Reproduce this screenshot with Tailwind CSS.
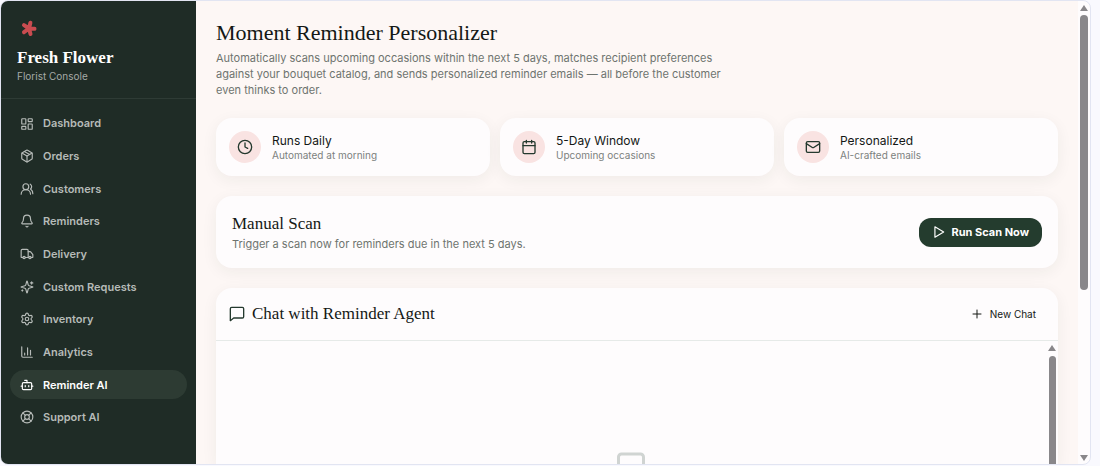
<!DOCTYPE html>
<html lang="en">
  <head>
    <meta charset="UTF-8" />
    <title>Fresh Flower | Florist Console</title>
    <meta name="viewport" content="width=device-width, initial-scale=1" />
    <script src="https://cdn.jsdelivr.net/npm/@tailwindcss/browser@4"></script>
  </head>
  <body class="h-screen overflow-hidden bg-[#f9f9fe] font-['Inter',sans-serif] text-[#141815]">
    <div class="h-full pr-[9px] pb-px">
      <div class="flex h-full overflow-hidden rounded-lg border border-[#e2e5f2] bg-[#fefcfd]">
        <aside class="flex w-[195px] shrink-0 flex-col bg-[#1f2c26]">
          <div class="border-b border-[#2e3b35] px-4 pt-[17px] pb-4">
            <svg class="size-6" viewBox="0 0 24 24" fill="none" stroke="#c94c50" stroke-width="4" stroke-linecap="round" aria-hidden="true">
              <path d="M12 10.500 13.400 4.800M12 10.500 17.500 10.800M12 10.500 13.500 16M12 10.500 7 14.200M12 10.500 7 7.200" />
            </svg>
            <h2 class="mt-1 font-['Liberation_Serif',serif] text-[17px] leading-6 font-bold text-white">Fresh Flower</h2>
            <p class="text-[10px] leading-3 text-[#a5aaa7]">Florist Console</p>
          </div>
          <nav class="flex flex-1 flex-col justify-between px-[9px] pt-[10px] pb-8 text-[11px] font-semibold text-[#b6bbb8]">
            <a href="#" class="flex h-[29px] items-center gap-[9px] rounded-full px-[10px]">
              <svg class="size-3.5" viewBox="0 0 24 24" fill="none" stroke="currentColor" stroke-width="2" stroke-linecap="round" stroke-linejoin="round" aria-hidden="true">
                <rect width="7" height="9" x="3" y="3" rx="1" />
                <rect width="7" height="5" x="14" y="3" rx="1" />
                <rect width="7" height="9" x="14" y="12" rx="1" />
                <rect width="7" height="5" x="3" y="16" rx="1" />
              </svg>
              Dashboard
            </a>
            <a href="#" class="flex h-[29px] items-center gap-[9px] rounded-full px-[10px]">
              <svg class="size-3.5" viewBox="0 0 24 24" fill="none" stroke="currentColor" stroke-width="2" stroke-linecap="round" stroke-linejoin="round" aria-hidden="true">
                <path d="M11 21.730a2 2 0 0 0 2 0l7-4A2 2 0 0 0 21 16V8a2 2 0 0 0-1-1.730l-7-4a2 2 0 0 0-2 0l-7 4A2 2 0 0 0 3 8v8a2 2 0 0 0 1 1.730z" />
                <path d="M12 22V12" />
                <path d="M3.300 7 12 12l8.700-5" />
                <path d="m7.500 4.270 9 5.150" />
              </svg>
              Orders
            </a>
            <a href="#" class="flex h-[29px] items-center gap-[9px] rounded-full px-[10px]">
              <svg class="size-3.5" viewBox="0 0 24 24" fill="none" stroke="currentColor" stroke-width="2" stroke-linecap="round" stroke-linejoin="round" aria-hidden="true">
                <path d="M18 21a8 8 0 0 0-16 0" />
                <circle cx="10" cy="8" r="5" />
                <path d="M22 20c0-3.370-2-6.500-4-8a5 5 0 0 0-.450-8.300" />
              </svg>
              Customers
            </a>
            <a href="#" class="flex h-[29px] items-center gap-[9px] rounded-full px-[10px]">
              <svg class="size-3.5" viewBox="0 0 24 24" fill="none" stroke="currentColor" stroke-width="2" stroke-linecap="round" stroke-linejoin="round" aria-hidden="true">
                <path d="M10.268 21a2 2 0 0 0 3.464 0" />
                <path d="M3.262 15.326A1 1 0 0 0 4 17h16a1 1 0 0 0 .740-1.673C19.410 13.956 18 12.499 18 8A6 6 0 0 0 6 8c0 4.499-1.411 5.956-2.738 7.326" />
              </svg>
              Reminders
            </a>
            <a href="#" class="flex h-[29px] items-center gap-[9px] rounded-full px-[10px]">
              <svg class="size-3.5" viewBox="0 0 24 24" fill="none" stroke="currentColor" stroke-width="2" stroke-linecap="round" stroke-linejoin="round" aria-hidden="true">
                <path d="M14 18V6a2 2 0 0 0-2-2H4a2 2 0 0 0-2 2v11a1 1 0 0 0 1 1h2" />
                <path d="M15 18H9" />
                <path d="M19 18h2a1 1 0 0 0 1-1v-3.650a1 1 0 0 0-.220-.624l-3.480-4.350A1 1 0 0 0 17.520 8H14" />
                <circle cx="17" cy="18" r="2" />
                <circle cx="7" cy="18" r="2" />
              </svg>
              Delivery
            </a>
            <a href="#" class="flex h-[29px] items-center gap-[9px] rounded-full px-[10px]">
              <svg class="size-3.5" viewBox="0 0 24 24" fill="none" stroke="currentColor" stroke-width="2" stroke-linecap="round" stroke-linejoin="round" aria-hidden="true">
                <path d="M9.937 15.500A2 2 0 0 0 8.500 14.063l-6.135-1.582a.5.5 0 0 1 0-.962L8.500 9.936A2 2 0 0 0 9.937 8.500l1.582-6.135a.5.5 0 0 1 .963 0L14.063 8.500A2 2 0 0 0 15.500 9.937l6.135 1.581a.5.5 0 0 1 0 .964L15.500 14.063a2 2 0 0 0-1.437 1.437l-1.582 6.135a.5.5 0 0 1-.963 0z" />
                <path d="M20 3v4M22 5h-4M4 17v2M5 18H3" />
              </svg>
              Custom Requests
            </a>
            <a href="#" class="flex h-[29px] items-center gap-[9px] rounded-full px-[10px]">
              <svg class="size-3.5" viewBox="0 0 24 24" fill="none" stroke="currentColor" stroke-width="2" stroke-linecap="round" stroke-linejoin="round" aria-hidden="true">
                <path d="M9.671 4.136a2.340 2.340 0 0 1 4.659 0 2.340 2.340 0 0 0 3.319 1.915 2.340 2.340 0 0 1 2.330 4.033 2.340 2.340 0 0 0 0 3.831 2.340 2.340 0 0 1-2.330 4.033 2.340 2.340 0 0 0-3.319 1.915 2.340 2.340 0 0 1-4.659 0 2.340 2.340 0 0 0-3.320-1.915 2.340 2.340 0 0 1-2.330-4.033 2.340 2.340 0 0 0 0-3.831A2.340 2.340 0 0 1 6.350 6.051a2.340 2.340 0 0 0 3.319-1.915" />
                <circle cx="12" cy="12" r="3" />
              </svg>
              Inventory
            </a>
            <a href="#" class="flex h-[29px] items-center gap-[9px] rounded-full px-[10px]">
              <svg class="size-3.5" viewBox="0 0 24 24" fill="none" stroke="currentColor" stroke-width="2" stroke-linecap="round" stroke-linejoin="round" aria-hidden="true">
                <path d="M3 3v16a2 2 0 0 0 2 2h16M8 17v-3M13 17V5M18 17V9" />
              </svg>
              Analytics
            </a>
            <a href="#" aria-current="page" class="flex h-[29px] items-center gap-[9px] rounded-full bg-[#2d3b33] px-[10px] text-white">
              <svg class="size-3.5" viewBox="0 0 24 24" fill="none" stroke="currentColor" stroke-width="2" stroke-linecap="round" stroke-linejoin="round" aria-hidden="true">
                <path d="M12 8V4H8" />
                <rect width="16" height="12" x="4" y="8" rx="2" />
                <path d="M2 14h2M20 14h2M15 13v2M9 13v2" />
              </svg>
              Reminder AI
            </a>
            <a href="#" class="flex h-[29px] items-center gap-[9px] rounded-full px-[10px]">
              <svg class="size-3.5" viewBox="0 0 24 24" fill="none" stroke="currentColor" stroke-width="2" stroke-linecap="round" stroke-linejoin="round" aria-hidden="true">
                <circle cx="12" cy="12" r="10" />
                <path d="m4.930 4.930 4.240 4.240M14.830 9.170l4.240-4.240M14.830 14.830l4.240 4.240M9.170 14.830l-4.240 4.240" />
                <circle cx="12" cy="12" r="4" />
              </svg>
              Support AI
            </a>
          </nav>
        </aside>

        <main class="flex min-w-0 flex-1 flex-col overflow-hidden bg-[#fdf7f5] px-5 pt-5">
          <h1 class="font-['Liberation_Serif',serif] text-[22px] leading-6">Moment Reminder Personalizer</h1>
          <p class="mt-[5px] max-w-[520px] text-[11px] leading-4 text-[#6e746f]">
            Automatically scans upcoming occasions within the next 5 days, matches recipient preferences against your bouquet catalog, and sends personalized reminder emails — all before the customer even thinks to order.
          </p>

          <div class="mt-5 grid shrink-0 grid-cols-3 gap-[10px]">
            <div class="flex h-[58px] items-center gap-[11px] rounded-2xl bg-[#fefcfd] px-[13px] shadow-[0_4px_16px_rgba(31,44,38,0.06)]">
              <div class="flex size-8 items-center justify-center rounded-full bg-[#f9e3e2]">
                <svg class="size-4" viewBox="0 0 24 24" fill="none" stroke="#24392e" stroke-width="2" stroke-linecap="round" stroke-linejoin="round" aria-hidden="true">
                  <circle cx="12" cy="12" r="10" />
                  <path d="M12 6v6l4 2" />
                </svg>
              </div>
              <div>
                <h3 class="text-xs leading-4">Runs Daily</h3>
                <p class="text-[10px] leading-3 text-[#7c817e]">Automated at morning</p>
              </div>
            </div>
            <div class="flex h-[58px] items-center gap-[11px] rounded-2xl bg-[#fefcfd] px-[13px] shadow-[0_4px_16px_rgba(31,44,38,0.06)]">
              <div class="flex size-8 items-center justify-center rounded-full bg-[#f9e3e2]">
                <svg class="size-4" viewBox="0 0 24 24" fill="none" stroke="#24392e" stroke-width="2" stroke-linecap="round" stroke-linejoin="round" aria-hidden="true">
                  <path d="M8 2v4M16 2v4M3 10h18" />
                  <rect width="18" height="18" x="3" y="4" rx="2" />
                </svg>
              </div>
              <div>
                <h3 class="text-xs leading-4">5-Day Window</h3>
                <p class="text-[10px] leading-3 text-[#7c817e]">Upcoming occasions</p>
              </div>
            </div>
            <div class="flex h-[58px] items-center gap-[11px] rounded-2xl bg-[#fefcfd] px-[13px] shadow-[0_4px_16px_rgba(31,44,38,0.06)]">
              <div class="flex size-8 items-center justify-center rounded-full bg-[#f9e3e2]">
                <svg class="size-4" viewBox="0 0 24 24" fill="none" stroke="#24392e" stroke-width="2" stroke-linecap="round" stroke-linejoin="round" aria-hidden="true">
                  <rect width="20" height="16" x="2" y="4" rx="2" />
                  <path d="m22 7-8.970 5.700a1.940 1.940 0 0 1-2.060 0L2 7" />
                </svg>
              </div>
              <div>
                <h3 class="text-xs leading-4">Personalized</h3>
                <p class="text-[10px] leading-3 text-[#7c817e]">AI-crafted emails</p>
              </div>
            </div>
          </div>

          <section class="mt-5 flex h-[72px] shrink-0 items-center justify-between rounded-2xl bg-[#fefcfd] px-4 shadow-[0_4px_16px_rgba(31,44,38,0.06)]">
            <div>
              <h2 class="font-['Liberation_Serif',serif] text-[17px] leading-6">Manual Scan</h2>
              <p class="text-[11px] leading-4 text-[#6e746f]">Trigger a scan now for reminders due in the next 5 days.</p>
            </div>
            <button type="button" class="flex h-[29px] items-center gap-[6px] rounded-xl bg-[#243c2e] px-[13px] text-[11px] font-bold text-white">
              <svg class="size-3.5" viewBox="0 0 24 24" fill="none" stroke="currentColor" stroke-width="2" stroke-linecap="round" stroke-linejoin="round" aria-hidden="true">
                <path d="M5 3 20 12 5 21z" />
              </svg>
              Run Scan Now
            </button>
          </section>

          <section class="mt-5 flex min-h-0 flex-1 flex-col overflow-hidden rounded-t-2xl bg-[#fefcfd] shadow-[0_4px_16px_rgba(31,44,38,0.06)]">
            <div class="flex h-[53px] shrink-0 items-center justify-between border-b border-[#e6eae8] px-[13px]">
              <h2 class="flex items-center gap-[7px] font-['Liberation_Serif',serif] text-[17px] leading-6">
                <svg class="size-4" viewBox="0 0 24 24" fill="none" stroke="#24392e" stroke-width="2" stroke-linecap="round" stroke-linejoin="round" aria-hidden="true">
                  <path d="M22 16a2 2 0 0 1-2 2H7l-5 4V4a2 2 0 0 1 2-2h16a2 2 0 0 1 2 2z" />
                </svg>
                Chat with Reminder Agent
              </h2>
              <button type="button" class="flex items-center gap-[7px] px-[9px] text-[10px] leading-4">
                <svg class="size-3" viewBox="0 0 24 24" fill="none" stroke="currentColor" stroke-width="2" stroke-linecap="round" aria-hidden="true">
                  <path d="M4 12h16M12 4v16" />
                </svg>
                New Chat
              </button>
            </div>
            <div class="flex min-h-0 flex-1">
              <div class="flex flex-1 justify-center overflow-hidden pt-[107px]">
                <svg class="size-8 shrink-0" viewBox="0 0 32 32" fill="none" stroke="#d0d4d2" stroke-width="3" stroke-linejoin="round" aria-hidden="true">
                  <path d="M3.500 32V9a3 3 0 0 1 3-3h19a3 3 0 0 1 3 3v23" />
                </svg>
              </div>
              <!-- chat scrollbar -->
              <div class="flex w-3 flex-col items-center gap-[5px] pt-1">
                <svg class="h-[6px] w-2 shrink-0" viewBox="0 0 8 6" fill="#89878a" aria-hidden="true"><path d="M4 0 8 6H0z" /></svg>
                <div class="w-[7px] flex-1 rounded-t-full bg-[#89878a]"></div>
              </div>
            </div>
          </section>
        </main>

        <!-- page scrollbar -->
        <div class="flex w-3 shrink-0 flex-col items-center justify-between pt-1 pb-[3px]">
          <div class="flex min-h-0 flex-1 flex-col items-center gap-1">
            <svg class="h-[6px] w-2 shrink-0" viewBox="0 0 8 6" fill="#89878a" aria-hidden="true"><path d="M4 0 8 6H0z" /></svg>
            <div class="h-[61%] w-2 rounded-full bg-[#89878a]"></div>
          </div>
          <svg class="h-[6px] w-2 shrink-0" viewBox="0 0 8 6" fill="#89878a" aria-hidden="true"><path d="M0 0h8L4 6z" /></svg>
        </div>
      </div>
    </div>
  </body>
</html>
